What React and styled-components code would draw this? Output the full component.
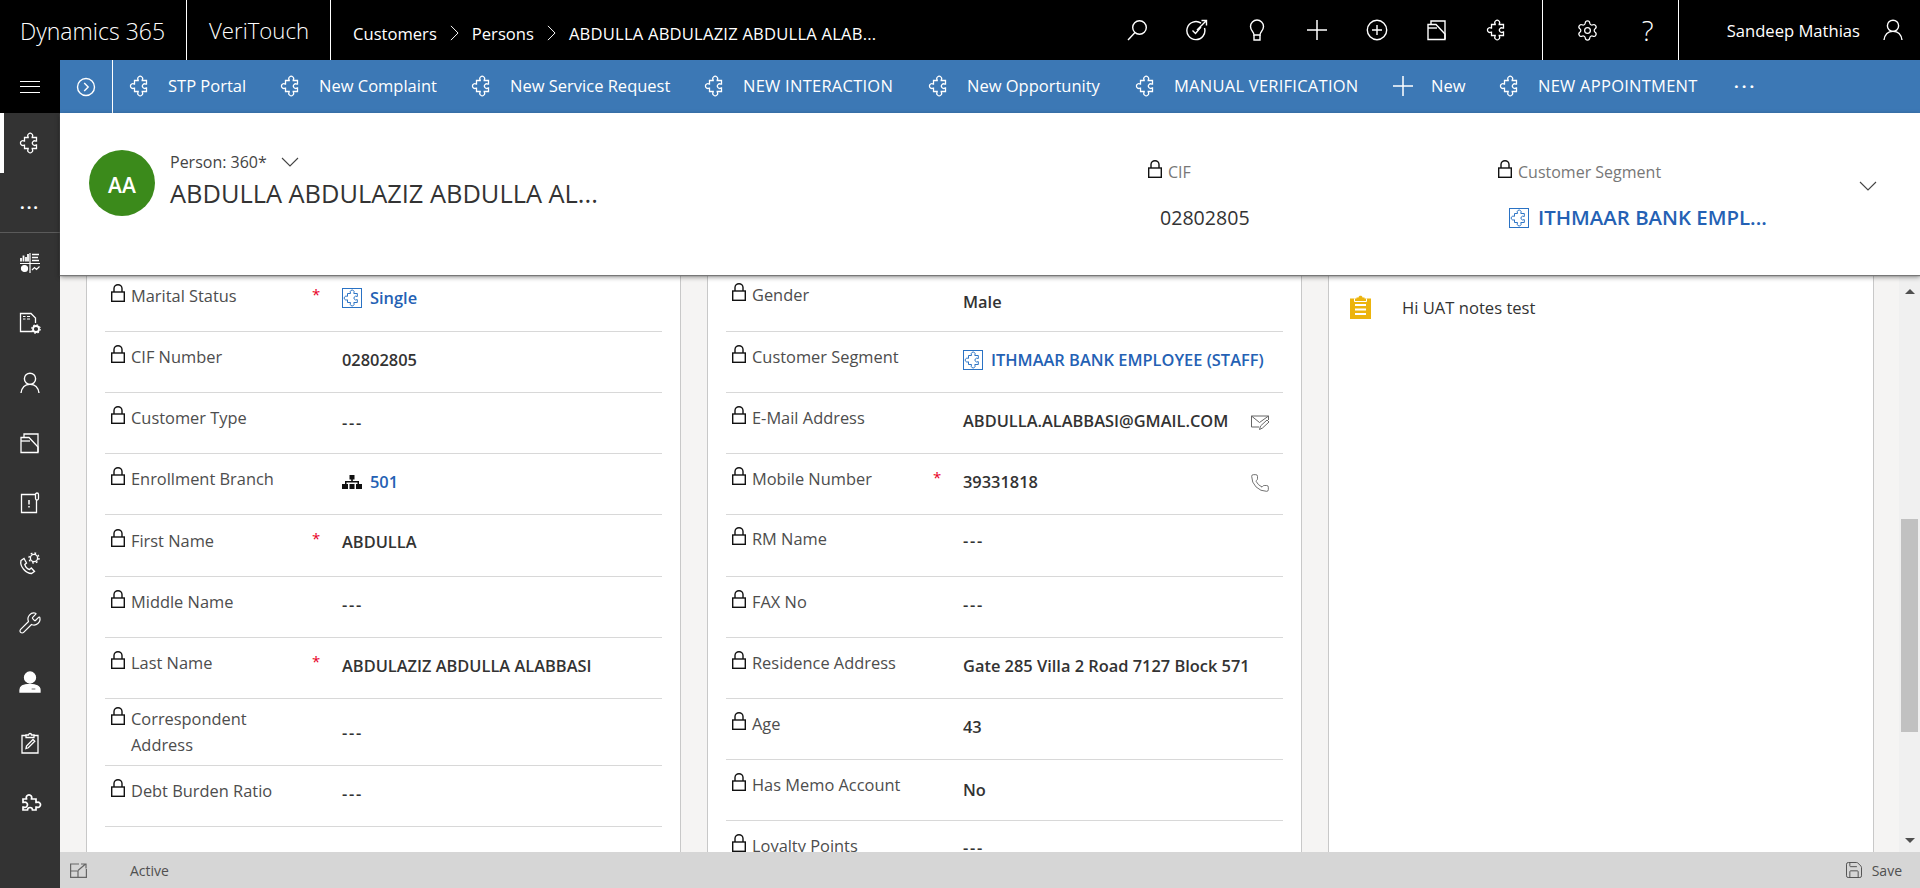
import React from 'react';
import styled, { createGlobalStyle } from 'styled-components';
import { Settings, Wrench, Phone, Save } from 'lucide-react';

const GlobalStyle = createGlobalStyle`
  html, body {
    margin: 0;
    padding: 0;
    height: 100%;
    overflow: hidden;
    background: #fff;
  }
  * { box-sizing: border-box; }
  body {
    font-family: "Open Sans", "Noto Sans", "Liberation Sans", sans-serif;
    font-size: 16.4px;
    color: #333;
  }
`;

const Page = styled.div`
  display: flex;
  flex-direction: column;
  width: 1920px;
  height: 888px;
  overflow: hidden;
`;

/* ---------- drawings ---------- */

const Svg = styled.svg`
  display: block;
  flex: none;
  fill: none;
  stroke: ${({ $color }) => $color || '#fff'};
  stroke-width: ${({ $sw }) => $sw || 1.3};
`;

const Puzzle = ({ size = 22, color, sw }) => (
  <Svg width={size} height={size} viewBox="0 0 22 22" $color={color} $sw={sw}>
    <path d="M5.5 5.5H9.2V5A2.4 2.4 0 1 1 13.2 5V5.5H17.5V9.2H17A2.3 2.3 0 1 0 17 13H17.5V16.5H13.2V17A2.4 2.4 0 1 1 9.2 17V16.5H5.5V13.2H5A2.4 2.4 0 1 1 5 9H5.5Z" />
  </Svg>
);

const Chevron = ({ w = 18, h = 10, dir = 'down', color }) => (
  <Svg width={w} height={h} viewBox={dir === 'down' ? '0 0 18 10' : '0 0 10 18'} $color={color} $sw={1.1}>
    <path d={dir === 'down' ? 'M1 1L9 9L17 1' : 'M1 1L9 9L1 17'} />
  </Svg>
);

const PlusGlyph = ({ size = 22 }) => (
  <Svg width={size} height={size} viewBox="0 0 22 22" $sw={1.5}>
    <path d="M1 11H21M11 1V21" />
  </Svg>
);

const SearchGlyph = () => (
  <Svg width={22} height={22} viewBox="0 0 22 22" $sw={1.4}>
    <circle cx="13.5" cy="8.5" r="6.8" />
    <path d="M9 13.5L2 21" />
  </Svg>
);

const TaskGlyph = () => (
  <Svg width={22} height={22} viewBox="0 0 22 22" $sw={1.4}>
    <path d="M15 4.2A9 9 0 1 0 18.5 9" />
    <path d="M6.5 11.5L9.5 14.5L15 8" />
    <path d="M11 11L20.5 1.5M15.5 1.5H20.5V6.5" />
  </Svg>
);

const BulbGlyph = () => (
  <Svg width={22} height={22} viewBox="0 0 22 22" $sw={1.4}>
    <path d="M8 16C8 13 4.5 11.5 4.5 7.5A6.5 6.5 0 0 1 17.5 7.5C17.5 11.5 14 13 14 16Z" />
    <path d="M8 16V21H14V16" />
  </Svg>
);

const CirclePlusGlyph = () => (
  <Svg width={22} height={22} viewBox="0 0 22 22" $sw={1.4}>
    <circle cx="11" cy="11" r="9.7" />
    <path d="M6 11H16M11 6V16" />
  </Svg>
);

const FolderGlyph = ({ sw = 1.4 }) => (
  <Svg width={22} height={22} viewBox="0 0 22 22" $sw={sw}>
    <path d="M5 5.5V2H19V20" />
    <path d="M2 5.5H10L19 15V20.5H2Z" />
    <path d="M2 9H11" />
  </Svg>
);

const PersonGlyph = () => (
  <Svg width={22} height={22} viewBox="0 0 22 22" $sw={1.4}>
    <circle cx="11" cy="6.8" r="5.6" />
    <path d="M2 21C2.8 15.5 6.2 12.4 11 12.4S19.2 15.5 20 21" />
  </Svg>
);

const ChartGlyph = () => (
  <Svg width={22} height={22} viewBox="0 0 22 22" $sw={1.2}>
    <path d="M1 11.5H21M11 1V21" />
    <path d="M2 9.5V6M4.5 9.5V3.5M7 9.5V5M9 9.5V2" strokeWidth="1.8" />
    <path d="M13 2.5H20M13 5.5H19M13 8.5H20" strokeWidth="1.6" />
    <circle cx="5.5" cy="16.5" r="3" fill="#fff" />
    <path d="M13 18L15.5 15.5L17.5 17.5L20.5 14.5" />
  </Svg>
);

const DocGearGlyph = () => (
  <Svg width={24} height={24} viewBox="0 0 24 24" $sw={1.3}>
    <path d="M14.5 20.5H2.5V2.5H13L17.5 7V12" />
    <path d="M5 5.5H7.5M9 5.5H12M5 8H7.5M9 8H12" strokeWidth="1" />
    <circle cx="18" cy="18" r="3" strokeWidth="1.8" />
    <circle cx="18" cy="18" r="4.2" strokeWidth="1.2" strokeDasharray="1.6 1.7" />
  </Svg>
);

const AlertDocGlyph = () => (
  <Svg width={22} height={22} viewBox="0 0 22 22" $sw={1.3}>
    <path d="M17 2.5H2.5V20.5H17.5V8" />
    <rect x="16.5" y="1" width="3" height="7" rx="1.5" />
    <path d="M10 8V12.5M10 14V15.5" strokeWidth="1.5" />
  </Svg>
);

const PhoneGearGlyph = () => (
  <Svg width={24} height={24} viewBox="0 0 24 24" $sw={1.3}>
    <path d="M3 9.5L6 7.5L8.5 12L6.8 13.5C7.5 16 9.5 18 11.5 18.5L13.3 17L16.5 20.5L13.5 22.5C8 22.5 1.5 15.5 3 9.5Z" />
    <circle cx="16" cy="7" r="3.6" />
    <circle cx="16" cy="7" r="5" strokeWidth="1.4" strokeDasharray="1.8 2.1" />
  </Svg>
);

const BadgePersonGlyph = () => (
  <Svg width={24} height={24} viewBox="0 0 24 24" $sw={0}>
    <circle cx="12" cy="6.5" r="5.5" fill="#fff" />
    <path fill="#fff" d="M2 21V19C2 15.5 6 13.5 12 13.5S22 15.5 22 19V21Z" />
    <rect x="13" y="17" width="5" height="2" fill="#333" />
  </Svg>
);

const ClipboardGlyph = () => (
  <Svg width={22} height={22} viewBox="0 0 22 22" $sw={1.3}>
    <path d="M7 3.5H3V21H19V3.5H15" />
    <path d="M7 5.5V3H9.5C9.5 1 12.5 1 12.5 3H15V5.5Z" />
    <path d="M7 16.5L7.5 14L14 7.5L15.8 9.3L9.3 15.8Z" />
  </Svg>
);

const WidePuzzleGlyph = () => (
  <Svg width={24} height={24} viewBox="0 0 24 24" $sw={1.7}>
    <path d="M5 8H8.5V7.5A2.7 2.7 0 1 1 13.5 7.5V8H18V11.5H18.5A2.6 2.6 0 1 1 18.5 16H18V19H14.5A2.5 2.5 0 1 0 9.5 19H5V16H5.5A2.6 2.6 0 1 0 5.5 11.5H5Z" />
  </Svg>
);

const Lock = () => (
  <Svg width={14} height={18} viewBox="0 0 14 18" $color="#111" $sw={1.4}>
    <path d="M3 8V4.5A4 3.8 0 0 1 11 4.5V8" />
    <rect x=".7" y="8" width="12.6" height="9.3" />
  </Svg>
);

const MailEditGlyph = () => (
  <Svg width={20} height={20} viewBox="0 0 20 20" $color="#666" $sw={1}>
    <path d="M9 15H1.5V4H18.5V8" />
    <path d="M1.5 4L9.5 10.5L18.5 4" />
    <path d="M9.5 17.5L10.5 14L17 8L19 10L12.5 16Z" />
  </Svg>
);

const OrgGlyph = () => (
  <svg width={20} height={14} viewBox="0 0 20 14" fill="#111">
    <rect x="7.5" y="0" width="5" height="4.5" />
    <rect x="9.2" y="4" width="1.6" height="3" />
    <rect x="3" y="6" width="14" height="1.5" />
    <rect x="3" y="6" width="1.5" height="3" />
    <rect x="15.5" y="6" width="1.5" height="3" />
    <rect x="0" y="9" width="6" height="5" />
    <rect x="7.5" y="9" width="5" height="5" />
    <rect x="14" y="9" width="6" height="5" />
  </svg>
);

const NotesGlyph = () => (
  <svg width={21} height={24} viewBox="0 0 21 24">
    <path fill="#ecb40d" d="M0 3.5H6.5V2.5H8.5C8.5 0 12.5 0 12.5 2.5H14.5V3.5H21V24H0Z" />
    <path stroke="#fff" strokeWidth="2" d="M5 10H16M5 14.5H16M5 19H16" />
    <path stroke="#fff" strokeWidth="1" fill="none" d="M4.5 3.5V6.5H16.5V3.5" />
  </svg>
);

const PopoutGlyph = () => (
  <Svg width={17} height={15} viewBox="0 0 17 15" $color="#666" $sw={1.2}>
    <path d="M9 1H.6V14.4H16.4V6" />
    <path d="M.6 8H8V14.4" />
    <path d="M8 7.5L15.5 1M11 1H16V5.5" />
  </Svg>
);

/* ---------- top bar ---------- */

const TopBar = styled.header`
  display: flex;
  align-items: stretch;
  height: 60px;
  flex: none;
  background: #000;
  color: #fff;
`;

const Brand = styled.div`
  display: flex;
  align-items: center;
  width: ${({ $w }) => $w}px;
  padding-left: ${({ $pad }) => $pad}px;
  padding-top: ${({ $top }) => $top || 0}px;
  border-right: 1px solid #fff;
  font-size: ${({ $size }) => $size}px;
  font-weight: 300;
`;

const Crumbs = styled.nav`
  display: flex;
  align-items: center;
  gap: 13px;
  flex: 1;
  padding-left: 22px;
  padding-top: 6px;
  font-size: 16.6px;
  white-space: nowrap;
`;

const CrumbRecord = styled.span`
  letter-spacing: 0.2px;
`;

const TopIcons = styled.div`
  display: flex;
  align-items: center;
  margin-right: 15px;
`;

const TopIcon = styled.div`
  display: flex;
  align-items: center;
  justify-content: center;
  width: 60px;
  height: 60px;
  font-size: 28px;
  font-weight: 300;
`;

const HelpGroup = styled.div`
  display: flex;
  align-items: center;
  padding-left: 15px;
  border-left: 1px solid #fff;
  border-right: 1px solid #fff;
`;

const User = styled.div`
  display: flex;
  align-items: center;
  gap: 22px;
  padding: 0 16px 0 48px;
  font-size: 16.6px;
  white-space: nowrap;
`;

/* ---------- body ---------- */

const Body = styled.div`
  display: flex;
  flex: 1;
  min-height: 0;
`;

const Sidebar = styled.aside`
  width: 60px;
  flex: none;
  background: #333;
`;

const Hamburger = styled.div`
  display: flex;
  flex-direction: column;
  justify-content: center;
  gap: 4.5px;
  height: 53px;
  padding: 0 20px;
  background: #000;

  span {
    display: block;
    height: 1px;
    background: #fff;
  }
`;

const NavItem = styled.div`
  display: flex;
  align-items: center;
  justify-content: center;
  height: 60px;
  color: #fff;
  border-left: ${({ $active }) => ($active ? '4px solid #fff' : '0')};
  padding-right: ${({ $active }) => ($active ? '4px' : '0')};
  border-bottom: ${({ $rule }) => ($rule ? '1px solid #5a5a5a' : '0')};
  letter-spacing: 2px;
  font-weight: 700;
`;

const Main = styled.div`
  display: flex;
  flex-direction: column;
  flex: 1;
  min-width: 0;
`;

const CommandBar = styled.div`
  display: flex;
  align-items: center;
  height: 53px;
  flex: none;
  background: #3c78b5;
  color: #fff;
`;

const Expand = styled.div`
  display: flex;
  align-items: center;
  justify-content: center;
  width: 53px;
  height: 53px;
  margin-right: 16px;
  border-right: 1px solid #fff;
`;

const Commands = styled.div`
  display: flex;
  align-items: center;
  padding-bottom: 2px;
`;

const Command = styled.div`
  display: flex;
  align-items: center;
  gap: 17px;
  width: ${({ $w }) => $w}px;
  white-space: nowrap;
  font-size: 16.5px;
  letter-spacing: ${({ $caps }) => ($caps ? '0.25px' : '0')};
`;

const MoreDots = styled.div`
  font-size: 16.5px;
  letter-spacing: 3px;
  font-weight: 700;
  padding-left: 2px;
`;

/* ---------- record header ---------- */

const RecordHeader = styled.section`
  position: relative;
  z-index: 2;
  display: flex;
  height: 162px;
  flex: none;
  background: #fff;
  box-shadow: 0 1px 1px #777, 0 2px 5px rgba(0, 0, 0, 0.45);
`;

const TitleArea = styled.div`
  display: flex;
  gap: 15px;
  width: 1088px;
  padding: 37px 0 0 29px;
`;

const Avatar = styled.div`
  display: flex;
  align-items: center;
  justify-content: center;
  width: 66px;
  height: 66px;
  padding-top: 3px;
  border-radius: 50%;
  background: #3b8a1b;
  color: #fff;
  font-size: 21px;
  font-weight: 600;
`;

const Titles = styled.div`
  padding-top: 0;
`;

const FormSelect = styled.div`
  display: flex;
  align-items: center;
  gap: 14px;
  height: 24px;
  font-size: 16px;
  color: #444;
`;

const RecordName = styled.div`
  margin-top: 2px;
  font-size: 25.4px;
  line-height: 34px;
  color: #333;
  white-space: nowrap;
`;

const HeaderField = styled.div`
  width: 350px;
  padding-top: 47px;
`;

const HeaderLabel = styled.div`
  display: flex;
  align-items: center;
  gap: 6px;
  height: 18px;
  font-size: 16px;
  color: #777;

  span {
    position: relative;
    top: 3px;
  }
`;

const HeaderValue = styled.div`
  display: flex;
  align-items: center;
  gap: 9px;
  margin: 24px 0 0 ${({ $indent }) => $indent}px;
  height: 30px;
  font-size: ${({ $link }) => ($link ? 20.4 : 19.6)}px;
  white-space: nowrap;
  color: ${({ $link }) => ($link ? '#2461b4' : '#333')};
  font-weight: ${({ $link }) => ($link ? 600 : 400)};
`;

const CollapseHeader = styled.div`
  padding: 68px 0 0 11px;
`;

/* ---------- form ---------- */

const Scroller = styled.div`
  display: flex;
  flex: 1;
  min-height: 0;
  background: #f5f4f3;
`;

const Sheets = styled.div`
  display: flex;
  gap: 26px;
  flex: 1;
  padding-left: 26px;
  overflow: hidden;
`;

const Card = styled.div`
  flex: none;
  width: ${({ $w }) => $w}px;
  height: 800px;
  margin-top: -4.4px;
  background: #fff;
  border-left: 1px solid #c8c8c8;
  border-right: 1px solid #c8c8c8;
  padding: 0 18px;
`;

const Row = styled.div`
  display: grid;
  grid-template-columns: 207px 30px 1fr;
  height: ${({ $h }) => $h || 61.2}px;
  border-bottom: 1px solid #d8d8d8;
`;

const LabelCell = styled.div`
  display: flex;
  gap: 6px;
  padding: ${({ $shift }) => 13.2 + ($shift || 0)}px 0 0 6px;
  font-size: 16.4px;
  line-height: 26px;
  color: #4d4d4d;
`;

const LabelText = styled.span`
  margin-top: -1px;
  white-space: pre-line;
`;

const Star = styled.div`
  padding-top: 11px;
  color: #e8001f;
  font-size: 15px;
  line-height: 24px;
`;

const ValueCell = styled.div`
  display: flex;
  align-items: flex-start;
  justify-content: space-between;
  padding: ${({ $shift }) => 15.6 + ($shift || 0)}px 13px 0 0;
`;

const Value = styled.div`
  display: flex;
  align-items: center;
  gap: 8px;
  height: 24px;
  margin-top: ${({ $dash }) => ($dash ? '2px' : '0')};
  font-size: 16.4px;
  font-weight: 600;
  white-space: nowrap;
  color: ${({ $link }) => ($link ? '#2461b4' : '#333')};
  letter-spacing: ${({ $dash }) => ($dash ? '1.7px' : '0')};
`;

const RowAction = styled.span`
  display: block;
  margin-top: 3px;
`;

const Lookup = styled.span`
  display: flex;
  align-items: center;
  justify-content: center;
  width: 20px;
  height: 20px;
  margin-top: 2px;
  border: 1px solid #2a72c4;
`;

const Note = styled.div`
  display: flex;
  align-items: flex-start;
  gap: 31px;
  padding: 24px 0 0 3px;
  font-size: 16.6px;
  line-height: 26px;
  color: #333;
`;

const Track = styled.div`
  display: flex;
  flex-direction: column;
  align-items: center;
  width: 21px;
  flex: none;
  background: #f0f0f0;
`;

const Arrow = styled.i`
  display: block;
  width: 0;
  height: 0;
  margin: ${({ $up }) => ($up ? '14px 0 0' : 'auto 0 9px')};
  border-left: 5px solid transparent;
  border-right: 5px solid transparent;
  border-bottom: ${({ $up }) => ($up ? '5px solid #505050' : '0')};
  border-top: ${({ $up }) => ($up ? '0' : '5px solid #505050')};
`;

const Thumb = styled.div`
  width: 17px;
  height: 213px;
  margin-top: 225px;
  background: #c1c1c1;
`;

const StatusBar = styled.footer`
  position: relative;
  z-index: 3;
  display: flex;
  align-items: center;
  height: 36px;
  flex: none;
  padding: 0 18px 0 10px;
  background: #d6d6d6;
  font-size: 14px;
  color: #505050;
`;

const StatusText = styled.span`
  margin-left: 43px;
`;

const SaveButton = styled.div`
  display: flex;
  align-items: center;
  gap: 8px;
  margin-left: auto;
`;

/* ---------- data ---------- */

const commands = [
  { text: 'STP Portal', width: 151 },
  { text: 'New Complaint', width: 191 },
  { text: 'New Service Request', width: 233 },
  { text: 'NEW INTERACTION', width: 224, caps: true },
  { text: 'New Opportunity', width: 207 },
  { text: 'MANUAL VERIFICATION', width: 257, caps: true },
  { text: 'New', width: 107, plus: true },
  { text: 'NEW APPOINTMENT', width: 233, caps: true },
];

const leftFields = [
  { label: 'Marital Status', required: true, value: 'Single', lookup: true, valueShift: -1 },
  { label: 'CIF Number', value: '02802805' },
  { label: 'Customer Type', value: '---' },
  { label: 'Enrollment Branch', value: '501', org: true },
  { label: 'First Name', required: true, value: 'ABDULLA', valueShift: -1 },
  { label: 'Middle Name', value: '---', valueShift: -2 },
  { label: 'Last Name', required: true, value: 'ABDULAZIZ ABDULLA ALABBASI' },
  { label: 'Correspondent\nAddress', value: '---', h: 67, labelShift: -5, valueShift: 4 },
  { label: 'Debt Burden Ratio', value: '---', valueShift: -2 },
];

const rightFields = [
  { label: 'Gender', value: 'Male', labelShift: -1, valueShift: 3 },
  { label: 'Customer Segment', value: 'ITHMAAR BANK EMPLOYEE (STAFF)', lookup: true },
  { label: 'E-Mail Address', value: 'ABDULLA.ALABBASI@GMAIL.COM', action: 'mail' },
  { label: 'Mobile Number', required: true, value: '39331818', action: 'phone' },
  { label: 'RM Name', value: '---', labelShift: -2, valueShift: -4 },
  { label: 'FAX No', value: '---', valueShift: -2 },
  { label: 'Residence Address', value: 'Gate 285 Villa 2 Road 7127 Block 571' },
  { label: 'Age', value: '43' },
  { label: 'Has Memo Account', value: 'No', valueShift: 2 },
  { label: 'Loyalty Points', value: '---', valueShift: -3 },
];

const FieldRow = ({ field }) => (
  <Row $h={field.h}>
    <LabelCell $shift={field.labelShift}>
      <Lock />
      <LabelText>{field.label}</LabelText>
    </LabelCell>
    <Star>{field.required ? '*' : ''}</Star>
    <ValueCell $shift={field.valueShift}>
      <Value $link={field.lookup || field.org} $dash={field.value === '---'}>
        {field.lookup && (
          <Lookup>
            <Puzzle size={18} color="#2a72c4" sw={1.2} />
          </Lookup>
        )}
        {field.org && <OrgGlyph />}
        {field.value}
      </Value>
      {field.action === 'mail' && <RowAction><MailEditGlyph /></RowAction>}
      {field.action === 'phone' && <RowAction><Phone size={20} strokeWidth={1.1} color="#666" /></RowAction>}
    </ValueCell>
  </Row>
);

const App = () => (
  <Page>
    <GlobalStyle />
    <TopBar>
      <Brand $w={187} $pad={20} $top={1} $size={23}>Dynamics 365</Brand>
      <Brand $w={144} $pad={22} $size={22.2}>VeriTouch</Brand>
      <Crumbs>
        <span>Customers</span>
        <Chevron w={9} h={16} dir="right" />
        <span>Persons</span>
        <Chevron w={9} h={16} dir="right" />
        <CrumbRecord>ABDULLA ABDULAZIZ ABDULLA ALAB...</CrumbRecord>
      </Crumbs>
      <TopIcons>
        <TopIcon><SearchGlyph /></TopIcon>
        <TopIcon><TaskGlyph /></TopIcon>
        <TopIcon><BulbGlyph /></TopIcon>
        <TopIcon><PlusGlyph /></TopIcon>
        <TopIcon><CirclePlusGlyph /></TopIcon>
        <TopIcon><FolderGlyph /></TopIcon>
        <TopIcon><Puzzle /></TopIcon>
      </TopIcons>
      <HelpGroup>
        <TopIcon><Settings size={23} strokeWidth={1.3} /></TopIcon>
        <TopIcon>?</TopIcon>
      </HelpGroup>
      <User>
        <span>Sandeep Mathias</span>
        <PersonGlyph />
      </User>
    </TopBar>
    <Body>
      <Sidebar>
        <Hamburger><span /><span /><span /></Hamburger>
        <NavItem $active><Puzzle /></NavItem>
        <NavItem $rule>...</NavItem>
        <NavItem><ChartGlyph /></NavItem>
        <NavItem><DocGearGlyph /></NavItem>
        <NavItem><PersonGlyph /></NavItem>
        <NavItem><FolderGlyph sw={1.3} /></NavItem>
        <NavItem><AlertDocGlyph /></NavItem>
        <NavItem><PhoneGearGlyph /></NavItem>
        <NavItem><Wrench size={24} strokeWidth={1.2} /></NavItem>
        <NavItem><BadgePersonGlyph /></NavItem>
        <NavItem><ClipboardGlyph /></NavItem>
        <NavItem><WidePuzzleGlyph /></NavItem>
      </Sidebar>
      <Main>
        <CommandBar>
          <Expand>
            <Svg width={20} height={20} viewBox="0 0 20 20" $sw={1.4}>
              <circle cx="10" cy="10" r="8.5" />
              <path d="M8.2 6L12.2 10L8.2 14" />
            </Svg>
          </Expand>
          <Commands>
            {commands.map((c) => (
              <Command key={c.text} $w={c.width} $caps={c.caps}>
                {c.plus ? <PlusGlyph /> : <Puzzle />}
                <span>{c.text}</span>
              </Command>
            ))}
            <MoreDots>···</MoreDots>
          </Commands>
        </CommandBar>
        <RecordHeader>
          <TitleArea>
            <Avatar>AA</Avatar>
            <Titles>
              <FormSelect>
                <span>Person: 360*</span>
                <Chevron color="#444" />
              </FormSelect>
              <RecordName>ABDULLA ABDULAZIZ ABDULLA AL...</RecordName>
            </Titles>
          </TitleArea>
          <HeaderField>
            <HeaderLabel><Lock /><span>CIF</span></HeaderLabel>
            <HeaderValue $indent={12}>02802805</HeaderValue>
          </HeaderField>
          <HeaderField>
            <HeaderLabel><Lock /><span>Customer Segment</span></HeaderLabel>
            <HeaderValue $indent={11} $link>
              <Lookup><Puzzle size={18} color="#2a72c4" sw={1.2} /></Lookup>
              ITHMAAR BANK EMPL...
            </HeaderValue>
          </HeaderField>
          <CollapseHeader><Chevron color="#444" /></CollapseHeader>
        </RecordHeader>
        <Scroller>
          <Sheets>
            <Card $w={595}>
              {leftFields.map((f) => <FieldRow key={f.label} field={f} />)}
            </Card>
            <Card $w={595}>
              {rightFields.map((f) => <FieldRow key={f.label} field={f} />)}
            </Card>
            <Card $w={546}>
              <Note>
                <NotesGlyph />
                <span>Hi UAT notes test</span>
              </Note>
            </Card>
          </Sheets>
          <Track>
            <Arrow $up />
            <Thumb />
            <Arrow />
          </Track>
        </Scroller>
        <StatusBar>
          <PopoutGlyph />
          <StatusText>Active</StatusText>
          <SaveButton>
            <Save size={20} strokeWidth={1.2} color="#555" />
            <span>Save</span>
          </SaveButton>
        </StatusBar>
      </Main>
    </Body>
  </Page>
);

export default App;
